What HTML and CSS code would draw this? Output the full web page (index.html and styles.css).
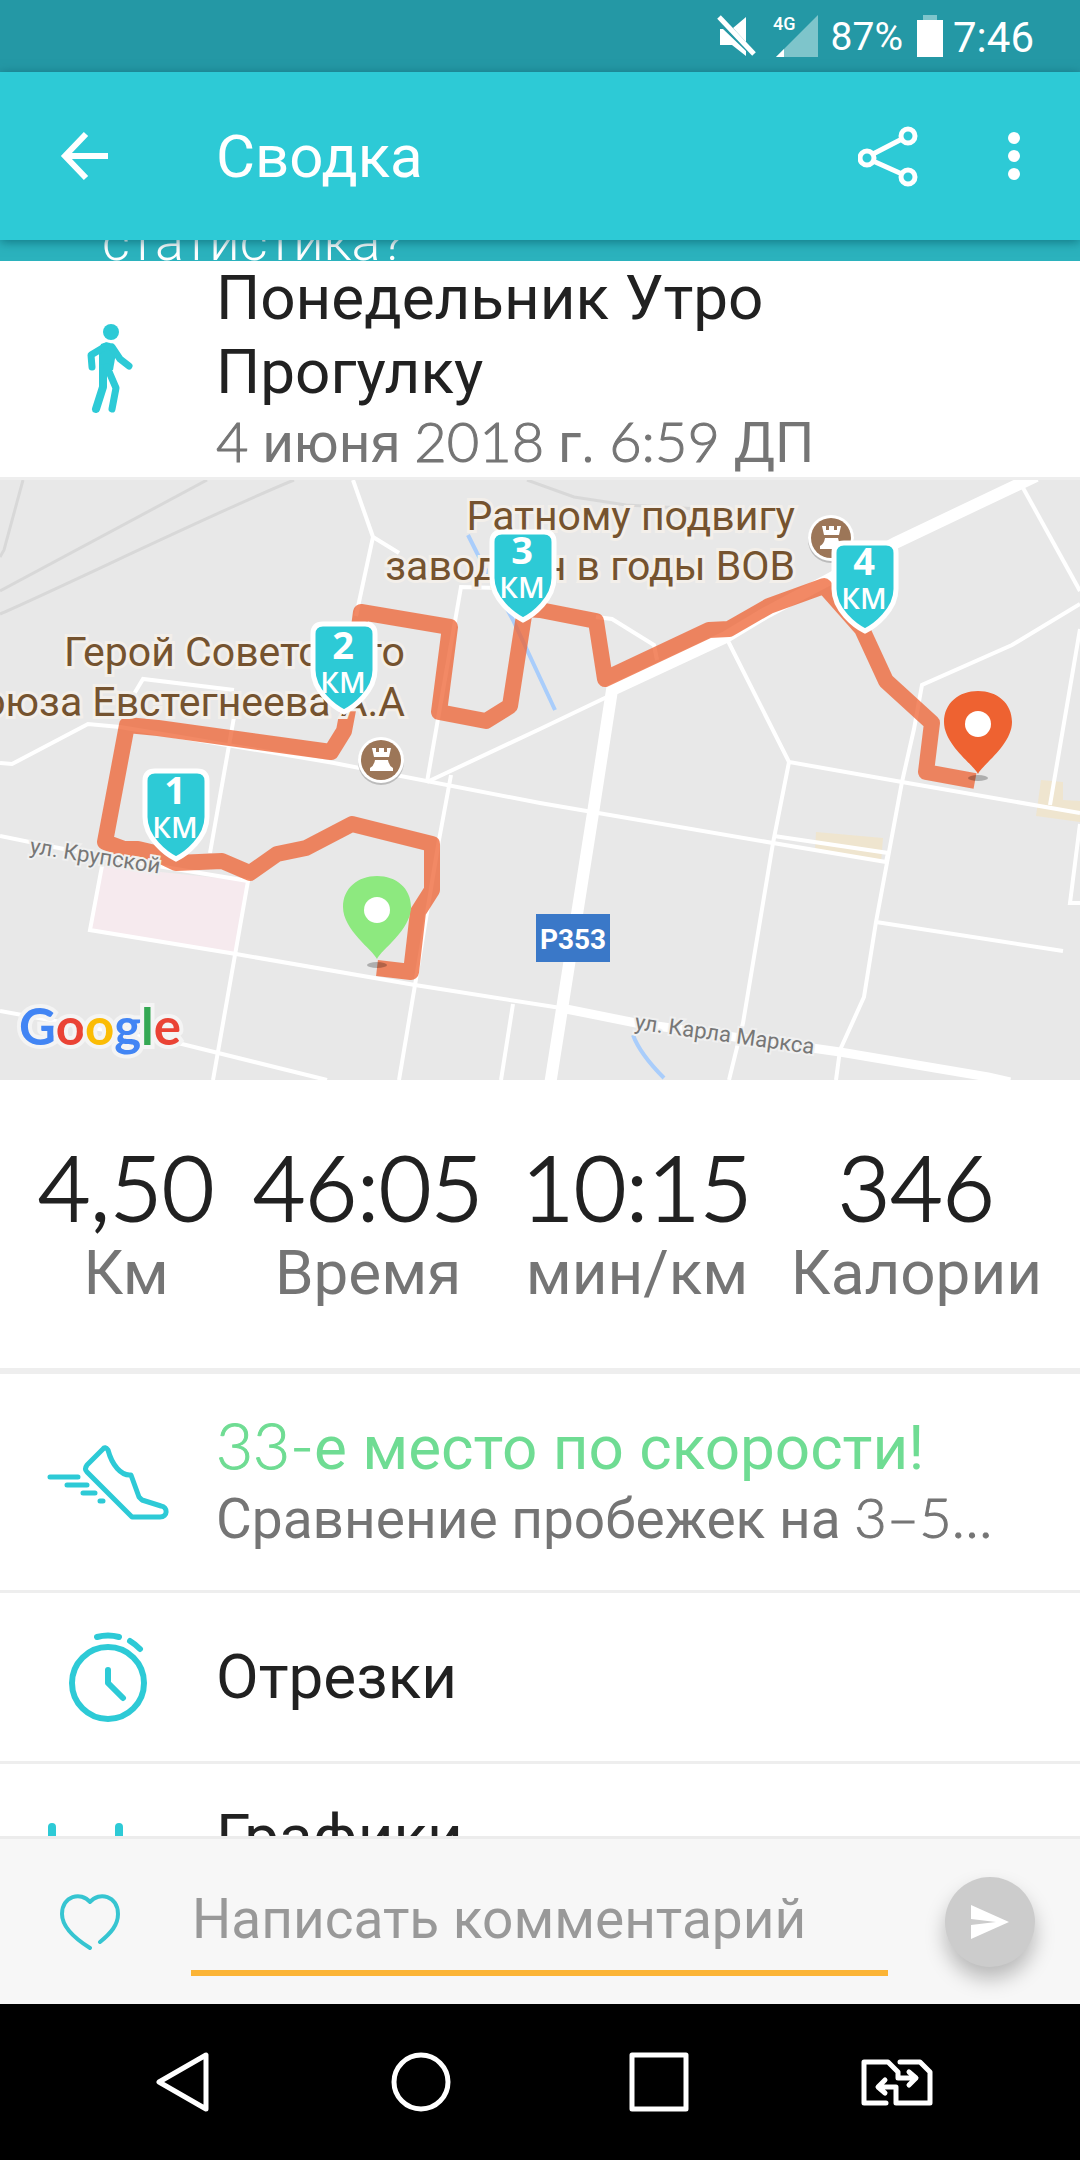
FILE: index.html
```html
<!DOCTYPE html>
<html lang="ru">
<head>
  <meta charset="UTF-8" />
  <meta name="viewport" content="width=device-width, initial-scale=1.0" />
  <title>Сводка</title>
  <link rel="stylesheet" href="styles.css">
</head>
<body>
  <div class="status-bar">
    <svg class="mute" width="40" height="42" viewBox="0 0 40 42">
      <path d="M16 13 L29 2 V27 Z M3 14 H6 L29 36 V41 L15 30 H3 Z" fill="#fff"/>
      <path d="M2 2 L37 39" stroke="#fff" stroke-width="5"/>
    </svg>
    <svg class="signal" width="46" height="50" viewBox="0 -4 46 50">
      <path d="M45 0 V42 H3 Z" fill="#7ec5cb"/>
      <path d="M11 34 V42 H3 Z" fill="#fff"/>
      <text x="0" y="15" class="net">4G</text>
    </svg>
    <span class="percent">87%</span>
    <svg class="battery" width="26" height="42" viewBox="0 0 26 42">
      <rect x="6" y="0" width="14" height="5" fill="#7ec5cb"/>
      <rect x="0" y="5" width="26" height="37" fill="#fff"/>
    </svg>
    <span class="clock">7:46</span>
  </div>

  <header class="app-bar">
    <button class="icon-btn back" aria-label="Назад">
      <svg width="48" height="50" viewBox="0 0 48 50" fill="none" stroke="#fff" stroke-width="6">
        <path d="M48 25 H6 M26 3 L5 25 L26 47"/>
      </svg>
    </button>
    <h1>Сводка</h1>
    <button class="icon-btn" aria-label="Поделиться">
      <svg width="60" height="62" viewBox="0 0 60 62" fill="none" stroke="#fff" stroke-width="5">
        <circle cx="9" cy="33" r="7"/>
        <circle cx="50" cy="11" r="7"/>
        <circle cx="50" cy="52" r="7"/>
        <path d="M15 29 L44 14 M15 36 L44 49"/>
      </svg>
    </button>
    <button class="icon-btn more" aria-label="Ещё">
      <svg width="12" height="50" viewBox="0 0 12 50" fill="#fff">
        <circle cx="6" cy="7" r="6"/>
        <circle cx="6" cy="25" r="6"/>
        <circle cx="6" cy="43" r="6"/>
      </svg>
    </button>
  </header>

  <main>
    <section class="promo"><p>статистика?</p></section>

    <section class="row activity">
      <div class="row-icon">
        <svg width="50" height="90" viewBox="-4 0 50 90" fill="none" stroke="#2dcad6" stroke-linecap="round" stroke-linejoin="round">
          <circle cx="24" cy="8" r="8" fill="#2dcad6" stroke="none"/>
          <path d="M14 20 Q22 16 28 22 L29 29 L26 46 H12 V28 Z" fill="#2dcad6" stroke="none"/>
          <path d="M5 43 L4 31 L19 22" stroke-width="7"/>
          <path d="M25 23 L33 35 L42 42" stroke-width="7"/>
          <path d="M16 44 L16 63 L9 85" stroke-width="8"/>
          <path d="M20 43 L29 64 L25 85" stroke-width="7"/>
        </svg>
      </div>
      <div class="row-text">
        <h2>Понедельник Утро Прогулку</h2>
        <p class="sub"><span class="num">4</span> июня <span class="num">2018</span> г. <span class="num">6:59</span> ДП</p>
      </div>
    </section>

    <section class="map">
      <svg viewBox="0 0 1080 600">
        <defs>
          <g id="shield">
            <path d="M-21 -91 H21 Q31 -91 31 -81 V-45 C31 -24 10 -8 0 -3 C-10 -8 -31 -24 -31 -45 V-81 Q-31 -91 -21 -91 Z" fill="#2dcad6" stroke="#fff" stroke-width="5"/>
          </g>
          <g id="castle">
            <circle cy="2" r="23" fill="#bbb"/>
            <circle r="23" fill="#fff"/>
            <circle r="20" fill="#9c7658"/>
            <path d="M-9 -12 H-5 V-8 H-2 V-12 H3 V-8 H6 V-12 H10 L8 -3 H-7 Z M-6 0 H7 Q8 6 12 8 V11 H-11 V8 Q-7 6 -6 0 Z" fill="#fff"/>
          </g>
          <path id="pin" d="M0 0 C-4 -9 -34 -29 -34 -52 C-34 -71 -19 -83 0 -83 C19 -83 34 -71 34 -52 C34 -29 4 -9 0 0 Z"/>
        </defs>

        <rect width="1080" height="600" fill="#e8e8e8"/>
        <path d="M102 386 L248 401 L236 474 L90 450 Z" fill="#f6eaee"/>
        <path d="M816 352 L883 358 L881 383 L815 371 Z M1041 300 L1063 302 V320 L1080 321 V342 L1036 336 Z" fill="#efe5cf"/>

        <!-- railway -->
        <g fill="none" stroke="#d8d8d8" stroke-width="3">
          <path d="M0 111 L207 0"/>
          <path d="M0 134 C60 108 220 30 294 0"/>
          <path d="M23 0 L4 70 L0 77"/>
          <path d="M527 0 L574 17 L626 25 L700 29"/>
        </g>

        <!-- streets -->
        <g fill="none" stroke="#fff" stroke-width="4">
          <path d="M353 0 L373 57 L356 136 M373 57 L399 73"/>
          <path d="M500 108 L461 107 L427 302"/>
          <path d="M0 283 L12 284 L88 244 L120 247 L334 283 L540 323 L773 363 L886 382"/>
          <path d="M134 214 L143 199 L234 210 M234 237 L210 373"/>
          <path d="M0 356 L103 377 L248 401 L213 600"/>
          <path d="M102 386 L90 450 L236 474 L415 505 L561 528"/>
          <path d="M0 531 L182 564 L327 600"/>
          <path d="M451 295 L439 360 L415 505 L399 600 M513 524 L501 600"/>
          <path d="M427 302 L540 249 L609 216"/>
          <path d="M596 137 L612 139 L654 165 L657 180"/>
          <path d="M1022 6 L1080 111"/>
          <path d="M1080 124 L1012 165 L922 205 L914 249 L902 302 L876 442 L864 517 L840 570 L836 600"/>
          <path d="M728 161 L789 282 L902 302 L1080 333"/>
          <path d="M789 282 L773 363 L743 543 L729 600"/>
          <path d="M1080 149 L1050 325 M1080 344 L1070 423 H1080 M876 442 L1063 471"/>
          <path d="M774 356 L888 373 L886 382"/>
        </g>
        <path d="M1036 -4 L895 63 L826 101 L764 134 L726 157 L612 210 L593 333 L550 605" fill="none" stroke="#fff" stroke-width="12"/>
        <path d="M561 528 L636 543 L840 572 L988 597 L1010 602" fill="none" stroke="#fff" stroke-width="9"/>
        <path d="M468 55 L477 73 L513 140 L555 230 M633 555 Q640 574 664 598" fill="none" stroke="#a9cdfb" stroke-width="4"/>

        <path class="route" d="M377 488 L411 492 L418 432 L432 410 V364 L352 344 L306 368 L277 374 L250 393 L222 381 L176 383 L155 373 L138 369 L124 369 L105 362 L127 245 L158 248 L331 272 L344 251 L348 230 L361 132 L450 147 L439 232 L486 241 L510 226 L525 129 L540 130 L596 141 L605 199 L709 150 L729 149 L769 126 L824 106 L862 149 L886 201 L932 243 L926 292 L975 301"/>

        <g class="place">
          <text x="405" y="186">Герой Советского</text>
          <text x="405" y="236">Союза Евстегнеева А.А</text>
          <text x="795" y="50">Ратному подвигу</text>
          <text x="795" y="100">заводчан в годы ВОВ</text>
        </g>

        <text class="street" transform="translate(29 373) rotate(9)">ул. Крупской</text>
        <text class="street" transform="translate(634 549) rotate(8)">ул. Карла Маркса</text>

        <rect x="536" y="434" width="74" height="48" fill="#3a78c8"/>
        <text x="573" y="469" class="road-no">P353</text>

        <use href="#castle" x="381" y="280"/>
        <use href="#castle" x="831" y="58"/>

        <g class="km">
          <use href="#shield" x="176" y="382"/>
          <text x="175" y="324">1</text><text x="175" y="358" class="unit">КМ</text>
          <use href="#shield" x="344" y="235"/>
          <text x="343" y="179">2</text><text x="343" y="213" class="unit">КМ</text>
          <use href="#shield" x="523" y="143"/>
          <text x="522" y="84">3</text><text x="522" y="118" class="unit">КМ</text>
          <use href="#shield" x="865" y="154"/>
          <text x="864" y="95">4</text><text x="864" y="129" class="unit">КМ</text>
        </g>

        <ellipse cx="377" cy="485" rx="10" ry="3" opacity=".25"/>
        <use href="#pin" x="377" y="479" fill="#8de97f"/>
        <circle cx="377" cy="430" r="13" fill="#fff"/>
        <ellipse cx="978" cy="298" rx="10" ry="3" opacity=".25"/>
        <use href="#pin" x="978" y="294" fill="#ee6231"/>
        <circle cx="978" cy="244" r="13" fill="#fff"/>

        <text x="19" y="565" class="google"><tspan fill="#4285f4">G</tspan><tspan fill="#ea4335">o</tspan><tspan fill="#fbbc05">o</tspan><tspan fill="#4285f4">g</tspan><tspan fill="#34a853">l</tspan><tspan fill="#ea4335">e</tspan></text>
      </svg>
    </section>

    <section class="stats">
      <div class="stat"><strong>4,50</strong><span>Км</span></div>
      <div class="stat"><strong>46:05</strong><span>Время</span></div>
      <div class="stat"><strong>10:15</strong><span>мин/км</span></div>
      <div class="stat"><strong>346</strong><span>Калории</span></div>
    </section>

    <section class="row rank">
      <div class="row-icon">
        <svg width="122" height="76" viewBox="0 0 122 76" fill="none" stroke="#2dcad6" stroke-width="5" stroke-linecap="round" stroke-linejoin="round">
          <path d="M56 5 L40 21 Q37 25 40 28 L85 73 H113 C121 73 121 63 114 62 L95 56 L92 53 L84 31 C74 32 65 21 61 6 Q58 2 56 5 Z"/>
          <path d="M3 33 H31 M20 41 H40 M36 49 H48 M53 57 H56"/>
        </svg>
      </div>
      <div class="row-text">
        <h2 class="good"><span class="num">33-</span>е место по скорости!</h2>
        <p class="sub">Сравнение пробежек на <span class="num">3–5…</span></p>
      </div>
    </section>

    <section class="row splits">
      <div class="row-icon">
        <svg width="78" height="90" viewBox="0 0 78 90" fill="none" stroke="#2dcad6" stroke-width="6" stroke-linecap="round" stroke-linejoin="round">
          <circle cx="39" cy="51" r="36"/>
          <path d="M39 38 V51 L54 66 M28 5 Q39 2 50 5 M61 9 Q66 12 71 17"/>
        </svg>
      </div>
      <div class="row-text"><h2>Отрезки</h2></div>
    </section>

    <section class="row charts">
      <div class="row-icon">
        <svg width="122" height="28" viewBox="0 0 122 28" fill="none" stroke="#2dcad6" stroke-width="8" stroke-linecap="round">
          <path d="M5 4 V24 M72 4 V24"/>
        </svg>
      </div>
      <div class="row-text"><h2>Графики</h2></div>
    </section>
  </main>

  <form class="comment-bar">
    <button type="button" class="icon-btn" aria-label="Нравится">
      <svg width="60" height="56" viewBox="0 0 60 56" fill="none" stroke="#36c5d1" stroke-width="4" stroke-linecap="round" stroke-linejoin="round">
        <path d="M30 54 C14 44 2 33 2 20 C2 2 21 -3 30 8 C39 -3 58 2 58 20 C58 31 51 39 40 48"/>
      </svg>
    </button>
    <input type="text" placeholder="Написать комментарий" aria-label="Комментарий" />
    <button type="button" class="send" aria-label="Отправить">
      <svg width="38" height="34" viewBox="0 0 38 34" fill="#fff">
        <path d="M0 0 L38 17 L0 34 V20 L25 17 L0 14 Z"/>
      </svg>
    </button>
  </form>

  <nav class="nav-bar">
    <button aria-label="Назад">
      <svg width="60" height="60" viewBox="0 0 60 60"><path d="M53 3 V57 L6 30 Z"/></svg>
    </button>
    <button aria-label="Домой">
      <svg width="60" height="60" viewBox="0 0 60 60"><circle cx="30" cy="30" r="27"/></svg>
    </button>
    <button aria-label="Недавние">
      <svg width="60" height="60" viewBox="0 0 60 60"><rect x="3" y="3" width="54" height="54"/></svg>
    </button>
    <button aria-label="Сменить SIM">
      <svg width="72" height="48" viewBox="0 0 72 48">
        <path d="M25 45 H3 V4 H27 L37 14 V20 H54 M48 14 L55 20 L48 27 M39 4 H59 L69 14 V45 H35 V29 H18 M24 22 L17 29 L24 35"/>
      </svg>
    </button>
  </nav>
</body>
</html>
```
FILE: styles.css
```css
* { box-sizing: border-box; margin: 0; padding: 0; }
html, body { height: 100%; }
body { display: flex; flex-direction: column; font-family: Roboto, "Noto Sans", sans-serif; background: #fff; color: #212121; overflow: hidden; }
button { border: 0; background: none; font: inherit; cursor: pointer; }
svg { display: block; }

.status-bar { flex: none; display: flex; justify-content: flex-end; align-items: center; height: 72px; padding-right: 46px; background: #2498a5; color: #fff; }
.mute { margin-right: 16px; }
.signal { margin-right: 12px; }
.net { font-size: 18px; font-weight: 500; fill: #fff; }
.percent { font-size: 39px; margin-right: 14px; padding-top: 2px; }
.battery { margin-right: 10px; }
.clock { font-size: 42px; padding-top: 2px; }

.app-bar { flex: none; display: flex; align-items: center; height: 168px; padding: 0 60px; background: #2dcad6; color: #fff; position: relative; z-index: 1; box-shadow: 0 2px 10px rgba(0, 80, 95, 0.6); }
.app-bar h1 { flex: 1; margin-left: 108px; font-size: 60px; font-weight: 400; }
.more { margin-left: 90px; }

main { flex: 1; min-height: 0; overflow: hidden; }
.promo { display: flex; align-items: flex-end; height: 21px; padding: 0 102px; overflow: hidden; background: #2bb2bd; color: #fff; }
.promo p { font-size: 54px; font-weight: 300; line-height: 38px; }

.row { display: flex; align-items: center; border-bottom: 3px solid #eee; }
.row-icon { flex: none; width: 216px; display: flex; justify-content: center; }
.row-text { flex: 1; min-width: 0; padding-right: 60px; }
.row h2 { font-size: 62px; line-height: 74px; font-weight: 400; }
.sub { font-size: 55px; line-height: 68px; color: #757575; white-space: nowrap; }
.num { font-family: Lato, Roboto, sans-serif; font-weight: 300; line-height: 1; -webkit-text-stroke: 1px currentColor; }
.row h2 .num { font-size: 64px; }
.sub .num { font-size: 56px; }
.good { color: #6fdc93; }
.activity .row-text { padding-right: 240px; }
.rank { padding: 37px 0; }
.splits { height: 171px; }
.charts { height: 148px; }

.map svg { width: 100%; height: auto; }
.place { font-size: 41px; fill: #75532f; stroke: #f3efea; stroke-width: 6px; paint-order: stroke; text-anchor: end; }
.route { fill: none; stroke: #ee6231; stroke-width: 16px; stroke-linejoin: round; opacity: 0.75; }
.street { font-size: 22px; fill: #777; stroke: #f0f0f0; stroke-width: 4px; paint-order: stroke; }
.road-no { font-size: 28px; font-weight: 700; fill: #fff; text-anchor: middle; }
.km { font-family: "Open Sans", sans-serif; font-size: 38px; font-weight: 700; fill: #fff; text-anchor: middle; }
.unit { font-size: 29px; font-weight: 600; }
.google { font-family: Lato, sans-serif; font-size: 51px; font-weight: 700; stroke: #f4f4f4; stroke-width: 8px; paint-order: stroke; }

.stats { display: flex; justify-content: space-between; padding: 55px 38px 59px; border-bottom: 6px solid #eee; }
.stat { display: flex; flex-direction: column; align-items: center; }
.stat strong { font-family: Lato, sans-serif; font-size: 90px; line-height: 102px; font-weight: 300; -webkit-text-stroke: 2px currentColor; }
.stat span { font-size: 62px; line-height: 72px; color: #757575; }

.comment-bar { flex: none; display: flex; align-items: center; height: 168px; padding: 0 45px 0 60px; background: #f7f7f7; border-top: 3px solid #ececec; }
.comment-bar input { flex: 1; min-width: 0; height: 109px; margin: 0 57px 0 71px; padding-left: 1px; border: 0; border-bottom: 6px solid #fbb436; outline: none; background: none; font: inherit; font-size: 55px; }
.comment-bar input::placeholder { color: #999; opacity: 1; }
.send { display: flex; align-items: center; justify-content: center; width: 90px; height: 90px; border-radius: 50%; background: #ccc; box-shadow: 0 12px 20px rgba(0, 0, 0, 0.25); }

.nav-bar { flex: none; display: flex; height: 156px; padding: 0 64px; background: #000; }
.nav-bar button { flex: 1; display: flex; align-items: center; justify-content: center; }
.nav-bar svg { fill: none; stroke: #fff; stroke-width: 5px; stroke-linejoin: round; stroke-linecap: round; }
```
